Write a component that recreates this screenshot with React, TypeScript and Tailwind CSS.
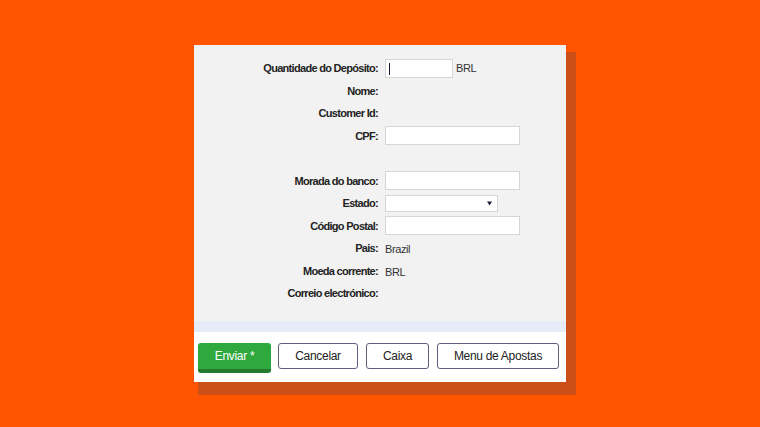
import React from "react";

type Row = {
  label?: string;
  kind?: "input" | "select" | "text" | "none";
  width?: string;
  value?: string;
  suffix?: string;
  cursor?: boolean;
};

const rows: Row[] = [
  { label: "Quantidade do Depósito:", kind: "input", width: "w-[68px]", suffix: "BRL", cursor: true },
  { label: "Nome:", kind: "none" },
  { label: "Customer Id:", kind: "none" },
  { label: "CPF:", kind: "input", width: "w-[135px]" },
  {},
  { label: "Morada do banco:", kind: "input", width: "w-[135px]" },
  { label: "Estado:", kind: "select" },
  { label: "Código Postal:", kind: "input", width: "w-[135px]" },
  { label: "Pais:", kind: "text", value: "Brazil" },
  { label: "Moeda corrente:", kind: "text", value: "BRL" },
  { label: "Correio electrónico:", kind: "none" },
];

function Field({ row }: { row: Row }) {
  if (row.kind === "input") {
    return (
      <div className="flex items-center gap-[3px]">
        <div
          className={`${row.width} relative h-[19px] border border-[#d6d6d6] bg-white`}
        >
          {row.cursor && (
            <span className="absolute left-[3px] top-[3px] h-[12px] w-px bg-[#1a1a3a]" />
          )}
        </div>
        {row.suffix && (
          <span className="text-[11px] tracking-[-0.4px] text-[#333]">{row.suffix}</span>
        )}
      </div>
    );
  }
  if (row.kind === "select") {
    return (
      <div className="flex h-[17px] w-[113px] items-center justify-end border border-[#d6d6d6] bg-white pr-[5px]">
        <svg width="5" height="5" viewBox="0 0 5 5">
          <path d="M0 0.5H5L2.5 4.5Z" fill="#1f1f3a" />
        </svg>
      </div>
    );
  }
  if (row.kind === "text") {
    return <span className="text-[11px] tracking-[-0.4px] text-[#333]">{row.value}</span>;
  }
  return null;
}

export default function App() {
  return (
    <div
      className="flex h-[427px] w-[760px] items-center justify-center bg-[#ff5500]"
      style={{ fontFamily: '"Liberation Sans", Arial, sans-serif' }}
    >
      <div className="flex h-[337px] w-[372px] flex-col bg-white shadow-[7px_10px_0_3px_#cb4f16]">
        <div className="flex flex-1 flex-col bg-[#f2f2f2] pt-[12px]">
          {rows.map((row, i) => (
            <div key={i} className="flex h-[22.5px] items-center">
              <div className="w-[184px] text-right text-[11px] font-bold tracking-[-0.7px] text-[#222]">
                {row.label}
              </div>
              <div className="pl-[7px]">
                <Field row={row} />
              </div>
            </div>
          ))}
        </div>
        <div className="h-[11px] bg-[#e6ecf8]" />
        <div className="flex h-[50px] items-start gap-[7px] bg-white pl-[4px] pt-[11px]">
          <button className="h-[30px] w-[73px] rounded-[3px] border-b-[4px] border-[#237a2c] bg-[#2fa83d] text-[12px] tracking-[-0.3px] text-white">
            Enviar *
          </button>
          <button className="h-[26px] w-[80px] rounded-[3px] border border-[#5c607e] bg-white text-[12px] tracking-[-0.3px] text-[#222]">
            Cancelar
          </button>
          <button className="ml-px h-[26px] w-[63px] rounded-[3px] border border-[#5c607e] bg-white text-[12px] tracking-[-0.3px] text-[#222]">
            Caixa
          </button>
          <button className="ml-px h-[26px] w-[122px] rounded-[3px] border border-[#5c607e] bg-white text-[12px] tracking-[-0.3px] text-[#222]">
            Menu de Apostas
          </button>
        </div>
      </div>
    </div>
  );
}
